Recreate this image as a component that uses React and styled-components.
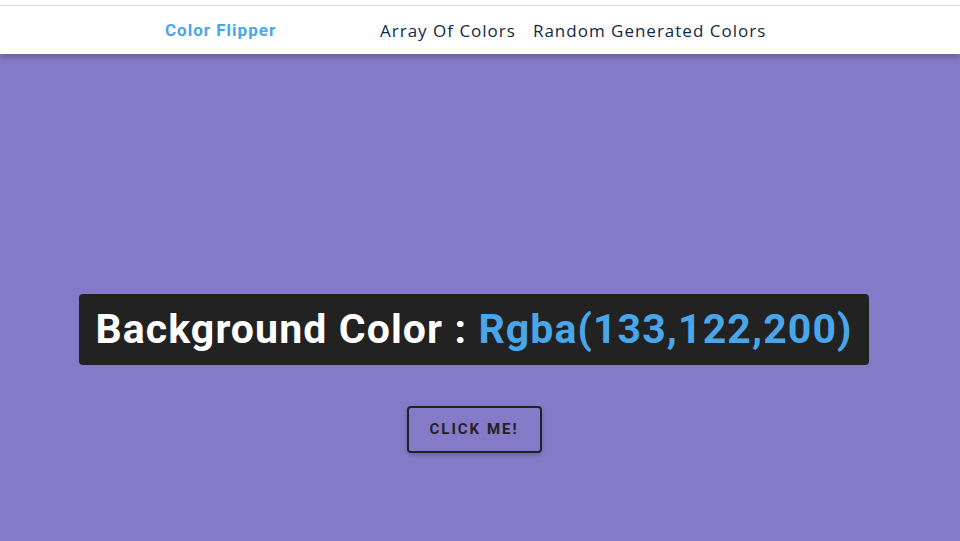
import React, { useState } from 'react';
import styled, { createGlobalStyle } from 'styled-components';

const colors = [
  [133, 122, 200],
  [73, 166, 233],
  [242, 132, 130],
  [132, 165, 157],
];

const GlobalStyle = createGlobalStyle`
  * { box-sizing: border-box; margin: 0; padding: 0; }
  body {
    font-family: 'Open Sans', 'Liberation Sans', sans-serif;
    overflow: hidden;
  }
`;

const Page = styled.main`
  min-height: 100vh;
  display: flex;
  flex-direction: column;
  transition: background 0.3s;
`;

const Nav = styled.nav`
  height: 54px;
  padding-top: 6px;
  background: linear-gradient(
    to bottom,
    #fff 0,
    #fff 5px,
    #dcdcdc 5px,
    #dcdcdc 6px,
    #fff 6px
  );
  box-shadow: 0 4px 6px rgba(0, 0, 0, 0.2);
  position: relative;
  z-index: 1;
  display: flex;
  justify-content: center;
  align-items: center;
`;

const NavCenter = styled.div`
  width: 602px;
  display: flex;
  align-items: center;
  transform: translateX(-14px);
`;

const Logo = styled.h4`
  flex: 0 0 215px;
  font-family: Roboto, 'Liberation Sans', sans-serif;
  font-size: 17px;
  font-weight: 700;
  letter-spacing: 1px;
  color: #49a6e9;
`;

const Links = styled.ul`
  list-style: none;
  display: flex;
  gap: 17px;
`;

const LinkItem = styled.li`
  font-size: 17px;
  letter-spacing: 1px;
  color: #102a42;
`;

const Container = styled.section`
  flex: 1;
  display: flex;
  flex-direction: column;
  align-items: center;
  justify-content: center;
  padding: 151px 12px 0 0;
`;

const Title = styled.h2`
  font-family: Roboto, 'Liberation Sans', sans-serif;
  font-size: 41px;
  font-weight: 700;
  letter-spacing: 1.1px;
  color: #fff;
  background: #222;
  border-radius: 4px;
  padding: 9px 16px 10px;
  line-height: 52px;
  margin-bottom: 41px;
`;

const Value = styled.span`
  color: #49a6e9;
`;

const Button = styled.button`
  font-family: Roboto, 'Liberation Sans', sans-serif;
  font-size: 15px;
  font-weight: 700;
  letter-spacing: 2px;
  text-transform: uppercase;
  color: #222;
  background: transparent;
  border: 2px solid #222;
  border-radius: 4px;
  width: 135px;
  height: 47px;
  box-shadow: 0 2px 4px rgba(0, 0, 0, 0.2);
  cursor: pointer;
`;

export default function App() {
  const [index, setIndex] = useState(0);
  const [r, g, b] = colors[index];
  return (
    <>
      <GlobalStyle />
      <Page style={{ background: `rgb(${r},${g},${b})` }}>
        <Nav>
          <NavCenter>
            <Logo>Color Flipper</Logo>
            <Links>
              <LinkItem>Array Of Colors</LinkItem>
              <LinkItem>Random Generated Colors</LinkItem>
            </Links>
          </NavCenter>
        </Nav>
        <Container>
          <Title>
            Background Color : <Value>Rgba({r},{g},{b})</Value>
          </Title>
          <Button onClick={() => setIndex((index + 1) % colors.length)}>
            Click Me!
          </Button>
        </Container>
      </Page>
    </>
  );
}
